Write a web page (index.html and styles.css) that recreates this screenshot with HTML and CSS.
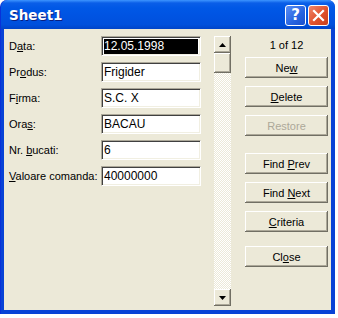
FILE: index.html
```html
<!DOCTYPE html>
<html lang="en">
<head>
  <meta charset="UTF-8" />
  <title>Sheet1</title>
  <link rel="stylesheet" href="styles.css">
</head>
<body>
  <div class="window">
    <div class="titlebar">
      <span class="title">Sheet1</span>
      <div class="caption-btns">
        <div class="cap-btn help">?</div>
        <div class="cap-btn close">
          <svg width="13" height="13" viewBox="0 0 13 13"><path d="M2 2 L11 11 M11 2 L2 11" stroke="#fff" stroke-width="2.2" stroke-linecap="square"/></svg>
        </div>
      </div>
    </div>
    <div class="client">
      <div class="fields">
        <label>D<u>a</u>ta:</label><div class="field focus"><span class="sel">12.05.1998</span></div>
        <label>Pr<u>o</u>dus:</label><div class="field">Frigider</div>
        <label>F<u>i</u>rma:</label><div class="field">S.C. X</div>
        <label>Ora<u>s</u>:</label><div class="field">BACAU</div>
        <label>Nr. <u>b</u>ucati:</label><div class="field">6</div>
        <label><u>V</u>aloare comanda:</label><div class="field">40000000</div>
      </div>
      <div class="scrollbar">
        <div class="sb-btn"><svg width="7" height="4" viewBox="0 0 7 4"><path d="M3.5 0 L7 4 L0 4 Z" fill="#000"/></svg></div>
        <div class="sb-thumb"></div>
        <div class="sb-track"></div>
        <div class="sb-btn"><svg width="7" height="4" viewBox="0 0 7 4"><path d="M0 0 L7 0 L3.5 4 Z" fill="#000"/></svg></div>
      </div>
      <div class="actions">
        <div class="counter">1 of 12</div>
        <button>Ne<u>w</u></button>
        <button><u>D</u>elete</button>
        <button class="disabled">Restore</button>
        <button class="gap1">Find <u>P</u>rev</button>
        <button>Find <u>N</u>ext</button>
        <button><u>C</u>riteria</button>
        <button class="gap2">Cl<u>o</u>se</button>
      </div>
    </div>
  </div>
</body>
</html>
```

FILE: styles.css
```css
body {
  margin: 0;
  background: #fff;
  font-family: "Liberation Sans", Arial, sans-serif;
  font-size: 11px;
}

.window {
  width: 335px;
  height: 314px;
  background: #0842d6;
  border-radius: 7px 7px 0 0;
  display: flex;
  flex-direction: column;
  box-sizing: border-box;
  padding: 0 4px 4px 3px;
  border-left: 1px solid #0831d9;
}

.titlebar {
  height: 29px;
  margin: 0 -4px 0 -3px;
  padding: 0 6px 0 8px;
  border-radius: 7px 7px 0 0;
  background: linear-gradient(#3d95ff 0, #0a5ee8 3px, #0058e6 8px, #0054e3 50%, #0050dc 85%, #0044c8 100%);
  display: flex;
  align-items: center;
  justify-content: space-between;
}

.title {
  color: #fff;
  font-family: "DejaVu Sans", sans-serif;
  font-weight: bold;
  font-size: 13.5px;
  text-shadow: 1px 1px #0a1f80;
  margin-top: 1px;
}

.caption-btns {
  display: flex;
  gap: 2px;
  margin-top: 1px;
}

.cap-btn {
  width: 19px;
  height: 19px;
  border: 1px solid #fff;
  border-radius: 3px;
  display: flex;
  align-items: center;
  justify-content: center;
  color: #fff;
}

.help {
  background: linear-gradient(135deg, #5a8ef5, #2663e0 60%, #1c4fcc);
  font-family: "DejaVu Sans", sans-serif;
  font-weight: bold;
  font-size: 15px;
}

.close {
  background: linear-gradient(135deg, #f0866a, #e0512c 55%, #c8401c);
}

.client {
  flex: 1;
  background: #ece9d8;
  display: flex;
  align-items: flex-start;
  padding: 7px 0 0 5px;
}

.fields {
  display: grid;
  grid-template-columns: 92px 100px;
  grid-auto-rows: 20px;
  row-gap: 6px;
  align-items: center;
}

label {
  color: #000;
}

.field {
  height: 20px;
  box-sizing: border-box;
  border: 1px solid;
  border-color: #aca899 #fff #fff #aca899;
  box-shadow: inset 1px 1px #404040, inset -1px -1px #f1efe2;
  background: #fff;
  padding: 2px 2px 0 2px;
  font-size: 12px;
  line-height: 15px;
  white-space: nowrap;
}

.field.focus .sel {
  display: block;
  background: #000;
  color: #fff;
  height: 15px;
}

.scrollbar {
  margin-left: 13px;
  width: 17px;
  height: 270px;
  display: flex;
  flex-direction: column;
}

.sb-btn, .sb-thumb {
  height: 17px;
  flex: none;
  background: #ece9d8;
  box-shadow: inset -1px -1px #716f64, inset 1px 1px #fff, inset -2px -2px #aca899;
  display: flex;
  align-items: center;
  justify-content: center;
}

.sb-thumb {
  height: 20px;
}

.sb-track {
  flex: 1;
  background: repeating-conic-gradient(#fff 0 25%, #ece9d8 0 50%) 0 0 / 2px 2px;
}

.actions {
  margin-left: 14px;
  width: 83px;
  display: flex;
  flex-direction: column;
  gap: 8px;
}

.counter {
  height: 13px;
  box-sizing: border-box;
  text-align: center;
  padding-top: 3px;
  line-height: 13px;
}

button {
  height: 21px;
  width: 83px;
  font-family: "Liberation Sans", Arial, sans-serif;
  font-size: 11px;
  color: #000;
  background: #ece9d8;
  border: none;
  padding: 0;
  box-shadow: inset -1px -1px #716f64, inset 1px 1px #fff, inset -2px -2px #aca899;
}

button.disabled {
  color: #aca899;
}

button.gap1 {
  margin-top: 9px;
}

button.gap2 {
  margin-top: 6px;
}
```
